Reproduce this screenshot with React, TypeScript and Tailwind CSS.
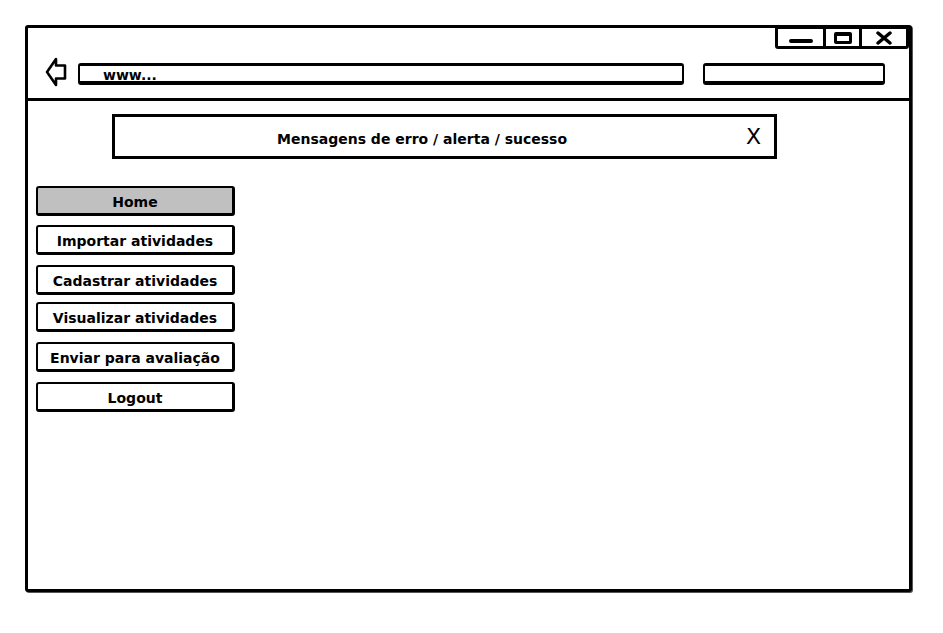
import React from 'react';

const navItems = [
  { label: 'Home', active: true, mt: 'mt-[27px]' },
  { label: 'Importar atividades', active: false, mt: 'mt-[9px]' },
  { label: 'Cadastrar atividades', active: false, mt: 'mt-[10px]' },
  { label: 'Visualizar atividades', active: false, mt: 'mt-[7px]' },
  { label: 'Enviar para avaliação', active: false, mt: 'mt-[10px]' },
  { label: 'Logout', active: false, mt: 'mt-[10px]' },
];

function WindowControls() {
  return (
    <div className="flex justify-end -mt-[2px]">
      <div className="flex h-[23px] border-[3px] border-black rounded-[3px] bg-white">
        <div className="w-[48px] flex items-center justify-center border-r-[3px] border-black">
          <div className="w-[24px] h-[4px] bg-black rounded-full mt-[6px]" />
        </div>
        <div className="w-[36px] flex items-center justify-center border-r-[3px] border-black">
          <div className="w-[18px] h-[12px] border-[3px] border-black border-t-[4px] rounded-[2px]" />
        </div>
        <div className="w-[44px] flex items-center justify-center">
          <svg width="18" height="14" viewBox="0 0 18 14">
            <path d="M3 2 L15 12 M15 2 L3 12" stroke="black" strokeWidth="3.5" strokeLinecap="round" />
          </svg>
        </div>
      </div>
    </div>
  );
}

export default function App() {
  return (
    <div className="min-h-screen bg-white pl-[25px] pt-[25px] font-['DejaVu_Sans',sans-serif] text-black">
      <div className="w-[887px] h-[567px] border-[3px] border-black rounded-[3px] flex flex-col bg-white shadow-[1px_1px_0_#555]">
        <WindowControls />

        {/* address row */}
        <div className="flex items-start pl-[17px] mt-[8px]">
          <svg width="22" height="30" viewBox="0 0 22 30" className="shrink-0">
            <path
              d="M2 15 L11 2 L11 8.5 L20 8.5 L20 21.5 L11 21.5 L11 28 Z"
              fill="none"
              stroke="black"
              strokeWidth="2.6"
              strokeLinejoin="round"
            />
          </svg>
          <div className="ml-[11px] mt-[6px] w-[606px] h-[22px] border-2 border-black border-t-[3px] border-b-[4px] rounded-[3px] flex items-center pl-[23px]">
            <span className="text-[14px] font-bold leading-none pt-[3px]">www...</span>
          </div>
          <div className="ml-[19px] mt-[6px] w-[182px] h-[22px] border-2 border-black border-t-[3px] border-b-[4px] rounded-[3px]" />
        </div>

        <div className="mt-[11px] border-t-[3px] border-black" />

        {/* message bar */}
        <div className="ml-[84px] mt-[13px] w-[665px] h-[45px] border-[3px] border-black flex items-center">
          <span className="pl-[162px] pt-[5px] text-[14px] font-bold whitespace-nowrap">
            Mensagens de erro / alerta / sucesso
          </span>
          <span className="ml-auto mr-[13px] text-[22px] leading-none">X</span>
        </div>

        {/* navigation */}
        <nav className="ml-[8px] flex flex-col">
          {navItems.map((item) => (
            <div
              key={item.label}
              className={`${item.mt} w-[199px] h-[30px] flex items-center justify-center pt-[3px] border-2 border-black border-r-[3px] border-b-[3px] rounded-[3px] text-[14px] font-bold whitespace-nowrap ${
                item.active ? 'bg-[#c0c0c0]' : 'bg-white'
              }`}
            >
              {item.label}
            </div>
          ))}
        </nav>
      </div>
    </div>
  );
}
